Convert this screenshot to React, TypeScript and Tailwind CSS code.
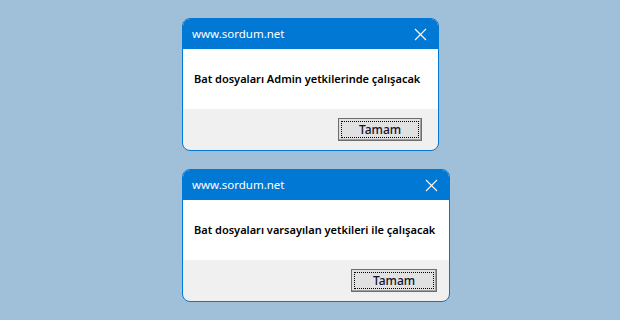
import React from "react";

type DialogProps = {
  title: string;
  message: string;
  width: string;
  buttonClass: string;
};

const CloseIcon = () => (
  <svg width="13" height="13" viewBox="0 0 13 13" fill="none">
    <path d="M1 1L12 12M12 1L1 12" stroke="#ffffff" strokeWidth="1.1" />
  </svg>
);

const Dialog: React.FC<DialogProps> = ({ title, message, width, buttonClass }) => {
  return (
    <div className={`${width} h-[133px] flex flex-col rounded-[8px] border border-[#0078d4] overflow-hidden bg-[#f0f0f0]`}>
      <div className="h-[30px] flex items-center justify-between bg-[#0078d4] pl-[9px] pr-[11px]">
        <span className="text-white text-[11.5px] font-['Noto_Sans',sans-serif]">{title}</span>
        <CloseIcon />
      </div>
      <div className="h-[60px] flex items-center bg-white pl-[11px]">
        <span className="text-[11px] font-semibold text-black font-['Noto_Sans',sans-serif]">{message}</span>
      </div>
      <div className="flex-1 flex items-start justify-end">
        <button className={`${buttonClass} border border-[#6d6d6d] bg-[#e1e1e1] p-[2px] shadow-[inset_-1px_-1px_0_#a0a0a0]`}>
          <div className="h-full w-full border border-dotted border-black flex items-center justify-center text-[12px] font-medium text-[#10102a] font-['Noto_Sans',sans-serif]">
            Tamam
          </div>
        </button>
      </div>
    </div>
  );
};

export default function App() {
  return (
    <div className="w-[620px] h-[320px] bg-[#a0bfd9] flex flex-col gap-[18px] pt-[18px] pl-[182px]">
      <Dialog
        title="www.sordum.net"
        message="Bat dosyaları Admin yetkilerinde çalışacak"
        width="w-[257px]"
        buttonClass="w-[84px] h-[23px] mt-[9px] mr-[16px]"
      />
      <Dialog
        title="www.sordum.net"
        message="Bat dosyaları varsayılan yetkileri ile çalışacak"
        width="w-[268px]"
        buttonClass="w-[86px] h-[23px] mt-[9px] mr-[12px]"
      />
    </div>
  );
}
